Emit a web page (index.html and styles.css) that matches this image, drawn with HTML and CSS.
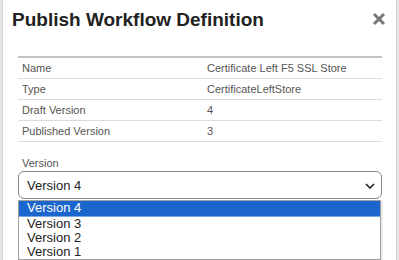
FILE: index.html
```html
<!DOCTYPE html>
<html>
  <head>
    <title>Publish Workflow Definition</title>
    <link rel="stylesheet" href="styles.css">
  </head>
  <body>
    <div class="modal">
      <div class="modal-header">
        <h2 class="modal-title">Publish Workflow Definition</h2>
        <svg class="close-x" width="14" height="14" viewBox="0 0 14 14">
          <path d="M2 2 L12 12 M12 2 L2 12" stroke="#777" stroke-width="3"/>
        </svg>
      </div>

      <div class="modal-body">
        <table class="details-table">
          <tr>
            <td class="label-cell">Name</td>
            <td>Certificate Left F5 SSL Store</td>
          </tr>
          <tr>
            <td class="label-cell">Type</td>
            <td>CertificateLeftStore</td>
          </tr>
          <tr>
            <td class="label-cell">Draft Version</td>
            <td>4</td>
          </tr>
          <tr>
            <td class="label-cell">Published Version</td>
            <td>3</td>
          </tr>
        </table>

        <div class="field-label">Version</div>
        <div class="select-wrap">
          <div class="select-box">
            <span>Version 4</span>
            <svg class="chevron" width="10" height="6" viewBox="0 0 10 6">
              <path d="M1 1 L5 5 L9 1" fill="none" stroke="#222" stroke-width="1.6"/>
            </svg>
          </div>
          <div class="select-list">
            <div class="option selected">Version 4</div>
            <div class="option">Version 3</div>
            <div class="option">Version 2</div>
            <div class="option">Version 1</div>
          </div>
        </div>
      </div>
    </div>
  </body>
</html>
```

FILE: styles.css
```css
body {
  margin: 0;
  background-color: #e4e4e4;
  font-family: "Liberation Sans", Arial, sans-serif;
}

.modal {
  box-sizing: border-box;
  height: 260px;
  margin: 0 2px 0 2px;
  padding-top: 2px;
  background-color: white;
  border-left: 1px solid #d6d6d6;
  border-right: 1px solid #d6d6d6;
}

.modal-header {
  display: flex;
  justify-content: space-between;
  align-items: flex-start;
  padding: 6px 10px 0 9px;
  height: 48px;
}

.modal-title {
  margin: 0;
  font-size: 19px;
  font-weight: bold;
  color: #222;
  line-height: 24px;
}

.close-x {
  margin-top: 4px;
}

.modal-body {
  padding: 0 14px 0 15px;
}

.details-table {
  width: 100%;
  border-collapse: collapse;
  border-top: 2px solid #c2c2c2;
  font-size: 11px;
  color: #555;
}

.details-table td {
  height: 20px;
  padding: 0 0 0 4px;
  border-bottom: 1px solid #dcdcdc;
}

.label-cell {
  width: 181px;
}

.field-label {
  margin-top: 15px;
  font-size: 11px;
  color: #555;
  line-height: 13px;
  padding-left: 4px;
}

.select-wrap {
  position: relative;
  margin-top: 1px;
}

.select-box {
  display: flex;
  justify-content: space-between;
  align-items: center;
  height: 26px;
  padding: 0 6px 0 8px;
  border: 1px solid #8a8a8a;
  border-radius: 6px;
  font-size: 13px;
  color: #222;
}

.chevron {
  margin-top: 2px;
}

.select-list {
  position: absolute;
  top: 29px;
  left: 0;
  right: 1px;
  background-color: white;
  border: 1px solid #a0a0a0;
  box-shadow: 1px 1px 2px rgba(0, 0, 0, 0.15);
}

.option {
  height: 14px;
  line-height: 14px;
  padding-left: 8px;
  font-size: 13px;
  color: #222;
}

.option.selected {
  height: 15px;
  background-color: #1b66cc;
  color: white;
  border-bottom: 1px solid #7aa9e8;
}
```
